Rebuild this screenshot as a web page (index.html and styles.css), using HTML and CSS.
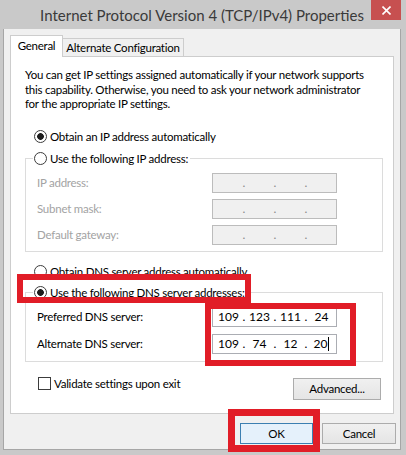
FILE: index.html
```html
<!DOCTYPE html>
<html lang="en">
<head>
    <meta charset="UTF-8">
    <meta name="viewport" content="width=device-width, initial-scale=1.0">
    <title>Internet Protocol Version 4 (TCP/IPv4) Properties</title>
    <link rel="stylesheet" href="styles.css">
</head>
<body>

    <div class="window">

        <!-- Title bar -->
        <div class="titlebar">
            <span></span>
            <div class="title">Internet Protocol Version 4 (TCP/IPv4) Properties</div>
            <button class="close">
                <svg width="9" height="9" viewBox="0 0 9 9"><path d="M0.5 0.5 L8.5 8.5 M8.5 0.5 L0.5 8.5" stroke="#fff" stroke-width="1.6"/></svg>
            </button>
        </div>

        <div class="client">

            <!-- Tabs -->
            <div class="tabs">
                <div class="tab tab-active">General</div>
                <div class="tab tab-alt">Alternate Configuration</div>
            </div>

            <div class="panel">
                <p class="intro">You can get IP settings assigned automatically if your network supports<br>this capability. Otherwise, you need to ask your network administrator<br>for the appropriate IP settings.</p>

                <label class="option option-first"><input class="radio" type="radio" name="ip" checked>Obtain an IP address automatically</label>

                <fieldset class="group group-ip">
                    <legend><label class="option"><input class="radio" type="radio" name="ip">Use the following IP address:</label></legend>
                    <div class="fields">
                        <span class="label label-off">IP address:</span>
                        <div class="ip ip-off"><span class="seg"></span><span class="dot">.</span><span class="seg"></span><span class="dot">.</span><span class="seg"></span><span class="dot">.</span><span class="seg"></span></div>
                        <span class="label label-off">Subnet mask:</span>
                        <div class="ip ip-off"><span class="seg"></span><span class="dot">.</span><span class="seg"></span><span class="dot">.</span><span class="seg"></span><span class="dot">.</span><span class="seg"></span></div>
                        <span class="label label-off">Default gateway:</span>
                        <div class="ip ip-off"><span class="seg"></span><span class="dot">.</span><span class="seg"></span><span class="dot">.</span><span class="seg"></span><span class="dot">.</span><span class="seg"></span></div>
                    </div>
                </fieldset>

                <label class="option option-dns-auto"><input class="radio" type="radio" name="dns">Obtain DNS server address automatically</label>

                <fieldset class="group group-dns">
                    <legend><label class="option"><input class="radio" type="radio" name="dns" checked>Use the following DNS server addresses:</label></legend>
                    <div class="fields">
                        <span class="label">Preferred DNS server:</span>
                        <div class="ip"><span class="seg">109</span><span class="dot">.</span><span class="seg">123</span><span class="dot">.</span><span class="seg">111</span><span class="dot">.</span><span class="seg">24</span></div>
                        <span class="label">Alternate DNS server:</span>
                        <div class="ip"><span class="seg">109</span><span class="dot">.</span><span class="seg">74</span><span class="dot">.</span><span class="seg">12</span><span class="dot">.</span><span class="seg">20<span class="caret"></span></span></div>
                    </div>
                </fieldset>

                <div class="footer">
                    <label class="check"><input class="checkbox" type="checkbox">Validate settings upon exit</label>
                    <button class="btn btn-advanced">Advanced...</button>
                </div>
            </div>

            <!-- Dialog buttons -->
            <div class="actions">
                <button class="btn btn-ok">OK</button>
                <button class="btn btn-cancel">Cancel</button>
            </div>
        </div>

        <!-- Red highlight marks drawn over the screenshot -->
        <div class="mark mark-radio"></div>
        <div class="mark mark-dns"></div>
        <div class="mark mark-ok"></div>
    </div>

</body>
</html>
```

FILE: styles.css
```css
* {
    box-sizing: border-box;
}

body {
    margin: 0;
    background-color: #fff;
    font-family: Lato, "Liberation Sans", sans-serif;
    font-size: 11.5px;
    letter-spacing: -0.25px;
    color: #000;
}

.window {
    position: relative;
    width: 406px;
    height: 455px;
    background-color: #c9c9c9;
    padding: 0 5px 5px 3px;
    display: flex;
    flex-direction: column;
}

/* Title bar */
.titlebar {
    height: 29px;
    flex-shrink: 0;
    display: grid;
    grid-template-columns: 1fr auto 1fr;
    align-items: center;
}

.title {
    font-size: 15px;
    letter-spacing: 0;
    color: #3a3a3a;
    white-space: nowrap;
}

.close {
    justify-self: end;
    align-self: start;
    width: 30px;
    height: 20px;
    padding: 0;
    border: none;
    background-color: #c75050;
    display: flex;
    align-items: center;
    justify-content: center;
}

/* Client area */
.client {
    flex: 1;
    background-color: #f0f0f0;
    border: 1px solid #a6a6a6;
    border-top: none;
    padding: 6px 6px 0;
    display: flex;
    flex-direction: column;
}

.tabs {
    display: flex;
    align-items: flex-end;
}

.tab {
    height: 18px;
    padding-top: 1px;
    line-height: 16px;
    text-align: center;
    white-space: nowrap;
    background-color: #f0f0f0;
    border: 1px solid #cdcdcd;
    border-bottom: none;
}

.tab-active {
    position: relative;
    z-index: 1;
    width: 53px;
    height: 22px;
    padding-top: 2px;
    margin-bottom: -1px;
    background-color: #fff;
}

.tab-alt {
    width: 122px;
    margin-left: -1px;
}

.panel {
    height: 358px;
    background-color: #fff;
    border: 1px solid #cdcdcd;
    padding: 11px 10px 0 14px;
}

.intro {
    margin: 0;
    line-height: 14.5px;
    white-space: nowrap;
}

/* Radio rows */
.option {
    display: flex;
    align-items: center;
    height: 16px;
    white-space: nowrap;
}

.option-first {
    margin-top: 17px;
    padding-left: 9px;
}

.option-dns-auto {
    margin-top: 12px;
    padding-left: 9px;
}

.radio {
    appearance: none;
    flex-shrink: 0;
    width: 13px;
    height: 13px;
    margin: 0 3px 0 0;
    border: 1px solid #3c3c3c;
    border-radius: 50%;
    background: #fff;
}

.radio:checked {
    background: radial-gradient(circle, #1c1c1c 0 3px, #fff 3.7px);
}

/* Group boxes */
.group {
    min-width: 0;
    margin: 6px 0 0;
    padding: 6px 0 6px 11px;
    border: 1px solid #dcdcdc;
}

.group-dns {
    margin-top: 5px;
    padding-bottom: 7px;
}

.group legend {
    margin-left: -4px;
    padding: 0 2px 0 1px;
}

.fields {
    display: grid;
    grid-template-columns: 175px 125px;
    row-gap: 6px;
    align-items: center;
}

.group-dns .fields {
    row-gap: 7px;
}

.label-off {
    color: #a3a3a3;
}

/* IP address boxes */
.ip {
    height: 20px;
    padding-left: 2px;
    line-height: 18px;
    letter-spacing: 0;
    font-size: 12px;
    border: 1px solid #abadb3;
    background-color: #fff;
    display: flex;
}

.ip-off {
    background-color: #f0f0f0;
    border-color: #bcbcbc;
    color: #8a8a8a;
}

.seg {
    width: 27px;
    text-align: center;
}

.dot {
    width: 4px;
    text-align: center;
}

.caret {
    display: inline-block;
    width: 1px;
    height: 14px;
    margin-left: 1px;
    background-color: #000;
    vertical-align: middle;
}

/* Footer */
.footer {
    margin-top: 15px;
    display: flex;
    justify-content: space-between;
    align-items: flex-start;
}

.check {
    display: flex;
    align-items: center;
    height: 13px;
    margin-left: 13px;
}

.checkbox {
    appearance: none;
    width: 13px;
    height: 13px;
    margin: 0 3px 0 0;
    border: 1px solid #3c3c3c;
    background: #fff;
}

.btn {
    height: 21px;
    padding: 0;
    font: inherit;
    letter-spacing: inherit;
    color: #000;
    border: 1px solid #acacac;
    background: linear-gradient(#f0f0f0, #e5e5e5);
}

.btn-advanced {
    width: 88px;
    height: 22px;
    margin: 1px 2px 0 0;
}

.actions {
    margin: 9px -2px 0 0;
    display: flex;
    justify-content: flex-end;
    gap: 9px;
}

.btn-ok {
    width: 73px;
    background: #e5f1fb;
    border-color: #3c7fb1;
}

.btn-cancel {
    width: 74px;
}

/* Red marks */
.mark {
    position: absolute;
    border: 6px solid #e11d27;
    pointer-events: none;
}

.mark-radio {
    left: 17px;
    top: 274px;
    width: 234px;
    height: 29px;
}

.mark-dns {
    left: 205px;
    top: 303px;
    width: 151px;
    height: 63px;
}

.mark-ok {
    left: 228px;
    top: 409px;
    width: 92px;
    height: 43px;
    border-width: 7px;
}
```
